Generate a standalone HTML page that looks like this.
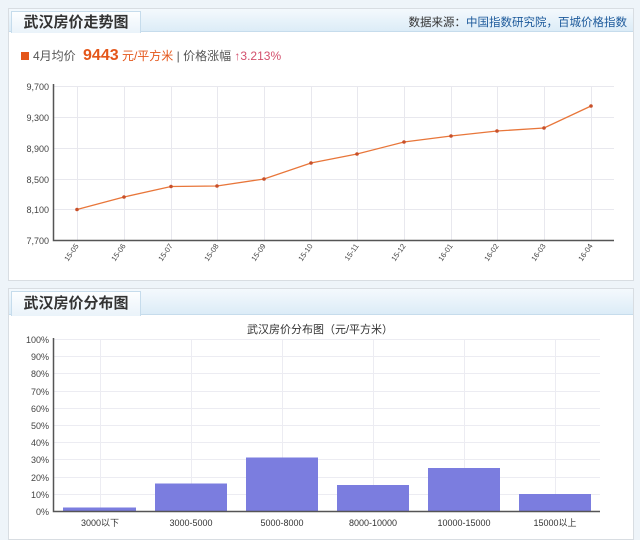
<!DOCTYPE html>
<html><head><meta charset="utf-8"><style>
body{margin:0;width:640px;height:534px;background:#eef4f9;overflow:hidden;font-family:"Liberation Sans","Noto Sans CJK SC",sans-serif}
.p{position:absolute;left:8px;width:624px;background:#fff;border:1px solid #d8dde2}
.h{position:absolute;left:0;top:0;right:0;height:22px;background:linear-gradient(#f4f9fd,#dcecf7);border-bottom:1px solid #c6dcec}
.t{position:absolute;left:2px;top:2px;width:128px;height:21px;background:linear-gradient(#fdfeff,#eaf3fa);border:1px solid #c6dcec;border-bottom:none;font-weight:bold;font-size:15px;color:#333;text-align:center;line-height:21px}
svg{position:absolute;left:0;top:0}
</style></head><body>
<div class="p" style="top:8px;height:271px">
 <div class="h"><div class="t">武汉房价走势图</div>
 <div style="position:absolute;right:6px;top:5px;font-size:11.5px;color:#333">数据来源：<span style="color:#1d5a9b">中国指数研究院，百城价格指数</span></div></div>
 <div style="position:absolute;left:12px;top:38px;font-size:12px;color:#555;white-space:nowrap"><span style="display:inline-block;width:8px;height:8px;background:#e4561a;margin-right:4px"></span>4月均价 <b style="color:#e4561a;font-size:16px;margin-left:4px">9443</b> <span style="color:#e4561a">元/平方米</span> | 价格涨幅 <span style="color:#d3506d">↑3.213%</span></div>
</div>
<div class="p" style="top:288px;height:250px">
 <div class="h" style="height:25px"><div class="t" style="height:24px;line-height:24px">武汉房价分布图</div></div>
</div>
<svg width="640" height="534" font-family="Liberation Sans,Noto Sans CJK SC,sans-serif">
<g stroke="#e8e8ee" stroke-width="1">
<line x1="53" y1="86.5" x2="614" y2="86.5"/><line x1="53" y1="117.5" x2="614" y2="117.5"/><line x1="53" y1="148.5" x2="614" y2="148.5"/><line x1="53" y1="179.5" x2="614" y2="179.5"/><line x1="53" y1="209.5" x2="614" y2="209.5"/>
<line x1="77.5" y1="86" x2="77.5" y2="240"/><line x1="124.5" y1="86" x2="124.5" y2="240"/><line x1="171.5" y1="86" x2="171.5" y2="240"/><line x1="217.5" y1="86" x2="217.5" y2="240"/><line x1="264.5" y1="86" x2="264.5" y2="240"/><line x1="311.5" y1="86" x2="311.5" y2="240"/><line x1="357.5" y1="86" x2="357.5" y2="240"/><line x1="404.5" y1="86" x2="404.5" y2="240"/><line x1="451.5" y1="86" x2="451.5" y2="240"/><line x1="497.5" y1="86" x2="497.5" y2="240"/><line x1="544.5" y1="86" x2="544.5" y2="240"/><line x1="591.5" y1="86" x2="591.5" y2="240"/>
</g>
<path d="M53.5 84V240.5H614" fill="none" stroke="#555" stroke-width="1.5"/>
<g font-size="9" fill="#444" text-anchor="end">
<text x="49" y="90">9,700</text><text x="49" y="121">9,300</text><text x="49" y="152">8,900</text><text x="49" y="183">8,500</text><text x="49" y="213">8,100</text><text x="49" y="244">7,700</text></g>
<g font-size="7.5" fill="#444" text-anchor="end">
<text transform="translate(79,246) rotate(-55)">15-05</text><text transform="translate(126,246) rotate(-55)">15-06</text><text transform="translate(173,246) rotate(-55)">15-07</text><text transform="translate(219,246) rotate(-55)">15-08</text><text transform="translate(266,246) rotate(-55)">15-09</text><text transform="translate(313,246) rotate(-55)">15-10</text><text transform="translate(359,246) rotate(-55)">15-11</text><text transform="translate(406,246) rotate(-55)">15-12</text><text transform="translate(453,246) rotate(-55)">16-01</text><text transform="translate(499,246) rotate(-55)">16-02</text><text transform="translate(546,246) rotate(-55)">16-03</text><text transform="translate(593,246) rotate(-55)">16-04</text></g>
<polyline points="77,209.5 124,197 171,186.5 217,186 264,179 311,163 357,154 404,142 451,136 497,131 544,128 591,106" fill="none" stroke="#e8763a" stroke-width="1.3"/>
<g fill="#c8502a"><circle cx="77" cy="209.5" r="1.8"/><circle cx="124" cy="197" r="1.8"/><circle cx="171" cy="186.5" r="1.8"/><circle cx="217" cy="186" r="1.8"/><circle cx="264" cy="179" r="1.8"/><circle cx="311" cy="163" r="1.8"/><circle cx="357" cy="154" r="1.8"/><circle cx="404" cy="142" r="1.8"/><circle cx="451" cy="136" r="1.8"/><circle cx="497" cy="131" r="1.8"/><circle cx="544" cy="128" r="1.8"/><circle cx="591" cy="106" r="1.8"/></g>
<text x="320" y="333" font-size="11" fill="#333" text-anchor="middle">武汉房价分布图（元/平方米）</text>
<g stroke="#ececf2"><line x1="53" y1="339.5" x2="600" y2="339.5"/><line x1="53" y1="356.5" x2="600" y2="356.5"/><line x1="53" y1="373.5" x2="600" y2="373.5"/><line x1="53" y1="391.5" x2="600" y2="391.5"/><line x1="53" y1="408.5" x2="600" y2="408.5"/><line x1="53" y1="425.5" x2="600" y2="425.5"/><line x1="53" y1="442.5" x2="600" y2="442.5"/><line x1="53" y1="459.5" x2="600" y2="459.5"/><line x1="53" y1="477.5" x2="600" y2="477.5"/><line x1="53" y1="494.5" x2="600" y2="494.5"/>
<line x1="100.5" y1="339" x2="100.5" y2="511"/><line x1="191.5" y1="339" x2="191.5" y2="511"/><line x1="282.5" y1="339" x2="282.5" y2="511"/><line x1="373.5" y1="339" x2="373.5" y2="511"/><line x1="464.5" y1="339" x2="464.5" y2="511"/><line x1="555.5" y1="339" x2="555.5" y2="511"/></g>
<g fill="#7b7ddf"><rect x="63" y="507.5" width="73" height="3.5"/><rect x="155" y="483.5" width="72" height="27.5"/><rect x="246" y="457.5" width="72" height="53.5"/><rect x="337" y="485" width="72" height="26"/><rect x="428" y="468" width="72" height="43"/><rect x="519" y="494" width="72" height="17"/></g>
<path d="M53.5 338V511.5H600" fill="none" stroke="#555" stroke-width="1.5"/>
<g font-size="9" fill="#444" text-anchor="end"><text x="49" y="343">100%</text><text x="49" y="360">90%</text><text x="49" y="377">80%</text><text x="49" y="395">70%</text><text x="49" y="412">60%</text><text x="49" y="429">50%</text><text x="49" y="446">40%</text><text x="49" y="463">30%</text><text x="49" y="481">20%</text><text x="49" y="498">10%</text><text x="49" y="515">0%</text></g>
<g font-size="9" fill="#333" text-anchor="middle"><text x="100" y="526">3000以下</text><text x="191" y="526">3000-5000</text><text x="282" y="526">5000-8000</text><text x="373" y="526">8000-10000</text><text x="464" y="526">10000-15000</text><text x="555" y="526">15000以上</text></g>
</svg>
</body></html>
